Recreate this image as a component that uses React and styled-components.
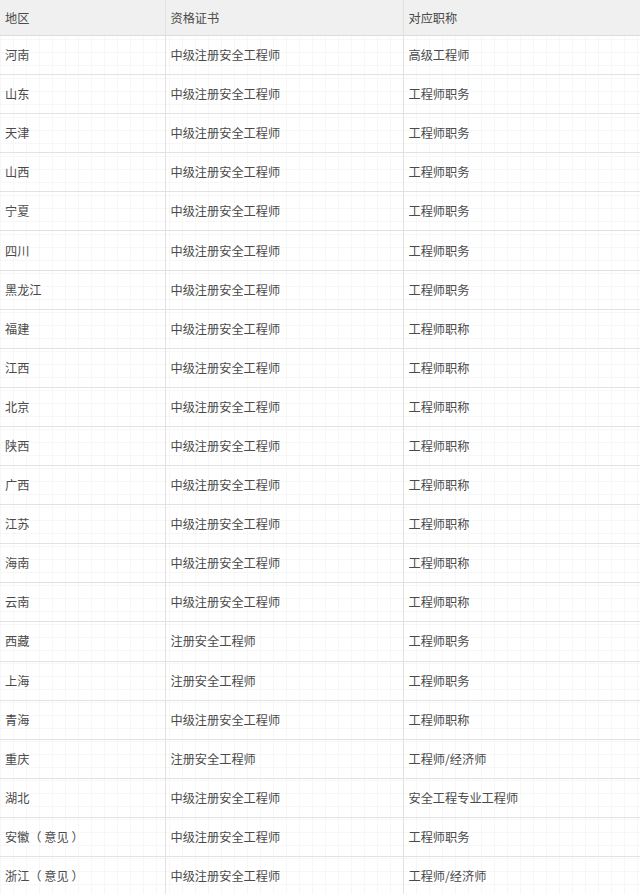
import styled, { createGlobalStyle } from "styled-components";

const GlobalStyle = createGlobalStyle`
  html, body {
    margin: 0;
    padding: 0;
    background: #fff;
  }
`;

const Table = styled.table`
  width: 640px;
  border-collapse: collapse;
  table-layout: fixed;
  font-family: "Noto Sans CJK SC", "Liberation Sans", sans-serif;
  font-size: 12.2px;
  color: #4a4a4a;
  background-color: #fff;
  background-image:
    linear-gradient(to right, #f7f7f7 1px, transparent 1px),
    linear-gradient(to bottom, #f7f7f7 1px, transparent 1px);
  background-size: 13px 13px;
`;

const Col = styled.col`
  width: ${(p) => p.$w}px;
`;

const HeadCell = styled.th`
  height: 35px;
  padding: 0 5px;
  text-align: left;
  font-weight: normal;
  background: #f0f0f0;
  border-bottom: 1px solid #dcdcdc;
  border-right: 1px solid #e2e2e2;
  &:last-child { border-right: none; }
`;

const Cell = styled.td`
  height: 38.1px;
  padding: 0 5px;
  border-bottom: 1px solid #e2e2e2;
  border-right: 1px solid #e2e2e2;
  white-space: nowrap;
  &:last-child { border-right: none; }
`;

const rows = [
  ["河南", "中级注册安全工程师", "高级工程师"],
  ["山东", "中级注册安全工程师", "工程师职务"],
  ["天津", "中级注册安全工程师", "工程师职务"],
  ["山西", "中级注册安全工程师", "工程师职务"],
  ["宁夏", "中级注册安全工程师", "工程师职务"],
  ["四川", "中级注册安全工程师", "工程师职务"],
  ["黑龙江", "中级注册安全工程师", "工程师职务"],
  ["福建", "中级注册安全工程师", "工程师职称"],
  ["江西", "中级注册安全工程师", "工程师职称"],
  ["北京", "中级注册安全工程师", "工程师职称"],
  ["陕西", "中级注册安全工程师", "工程师职称"],
  ["广西", "中级注册安全工程师", "工程师职称"],
  ["江苏", "中级注册安全工程师", "工程师职称"],
  ["海南", "中级注册安全工程师", "工程师职称"],
  ["云南", "中级注册安全工程师", "工程师职称"],
  ["西藏", "注册安全工程师", "工程师职务"],
  ["上海", "注册安全工程师", "工程师职务"],
  ["青海", "中级注册安全工程师", "工程师职称"],
  ["重庆", "注册安全工程师", "工程师/经济师"],
  ["湖北", "中级注册安全工程师", "安全工程专业工程师"],
  ["安徽（ 意见 ）", "中级注册安全工程师", "工程师职务"],
  ["浙江（ 意见 ）", "中级注册安全工程师", "工程师/经济师"],
];

export default function App() {
  return (
    <>
      <GlobalStyle />
      <Table>
        <colgroup>
          <Col $w={165} />
          <Col $w={238} />
          <Col $w={237} />
        </colgroup>
        <thead>
          <tr>
            <HeadCell>地区</HeadCell>
            <HeadCell>资格证书</HeadCell>
            <HeadCell>对应职称</HeadCell>
          </tr>
        </thead>
        <tbody>
          {rows.map((r, i) => (
            <tr key={i}>
              {r.map((c, j) => (
                <Cell key={j}>{c}</Cell>
              ))}
            </tr>
          ))}
        </tbody>
      </Table>
    </>
  );
}
